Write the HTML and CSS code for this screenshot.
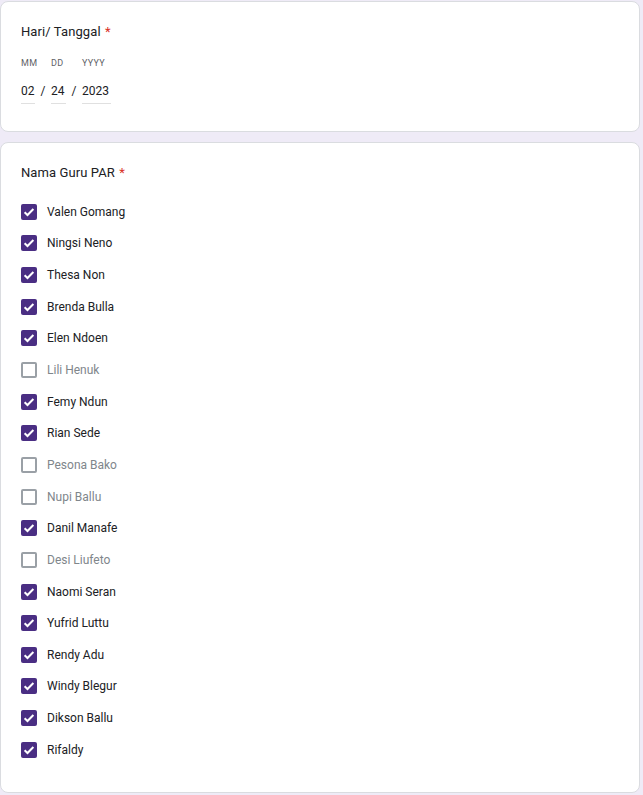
FILE: index.html
```html
<!DOCTYPE html>
<html lang="id">
<head>
<meta charset="utf-8">
<title>Form</title>
<link rel="stylesheet" href="styles.css">
</head>
<body>
<main class="page">
  <section class="card card-date">
    <div class="q-title">Hari/ Tanggal <span class="req">*</span></div>
    <div class="date">
      <div class="date-part w-mm">
        <div class="date-label">MM</div>
        <div class="date-value">02</div>
      </div>
      <div class="date-sep">/</div>
      <div class="date-part w-dd">
        <div class="date-label">DD</div>
        <div class="date-value">24</div>
      </div>
      <div class="date-sep">/</div>
      <div class="date-part w-yy">
        <div class="date-label">YYYY</div>
        <div class="date-value">2023</div>
      </div>
    </div>
  </section>

  <section class="card card-list">
    <div class="q-title">Nama Guru PAR <span class="req">*</span></div>
    <ul class="opts">
      <li class="opt on"><span class="box"><svg viewBox="0 0 16 16"><path d="M3.6 8.2l2.9 2.8 5.9-6"/></svg></span><span class="lbl">Valen Gomang</span></li>
      <li class="opt on"><span class="box"><svg viewBox="0 0 16 16"><path d="M3.6 8.2l2.9 2.8 5.9-6"/></svg></span><span class="lbl">Ningsi Neno</span></li>
      <li class="opt on"><span class="box"><svg viewBox="0 0 16 16"><path d="M3.6 8.2l2.9 2.8 5.9-6"/></svg></span><span class="lbl">Thesa Non</span></li>
      <li class="opt on"><span class="box"><svg viewBox="0 0 16 16"><path d="M3.6 8.2l2.9 2.8 5.9-6"/></svg></span><span class="lbl">Brenda Bulla</span></li>
      <li class="opt on"><span class="box"><svg viewBox="0 0 16 16"><path d="M3.6 8.2l2.9 2.8 5.9-6"/></svg></span><span class="lbl">Elen Ndoen</span></li>
      <li class="opt off"><span class="box"></span><span class="lbl">Lili Henuk</span></li>
      <li class="opt on"><span class="box"><svg viewBox="0 0 16 16"><path d="M3.6 8.2l2.9 2.8 5.9-6"/></svg></span><span class="lbl">Femy Ndun</span></li>
      <li class="opt on"><span class="box"><svg viewBox="0 0 16 16"><path d="M3.6 8.2l2.9 2.8 5.9-6"/></svg></span><span class="lbl">Rian Sede</span></li>
      <li class="opt off"><span class="box"></span><span class="lbl">Pesona Bako</span></li>
      <li class="opt off"><span class="box"></span><span class="lbl">Nupi Ballu</span></li>
      <li class="opt on"><span class="box"><svg viewBox="0 0 16 16"><path d="M3.6 8.2l2.9 2.8 5.9-6"/></svg></span><span class="lbl">Danil Manafe</span></li>
      <li class="opt off"><span class="box"></span><span class="lbl">Desi Liufeto</span></li>
      <li class="opt on"><span class="box"><svg viewBox="0 0 16 16"><path d="M3.6 8.2l2.9 2.8 5.9-6"/></svg></span><span class="lbl">Naomi Seran</span></li>
      <li class="opt on"><span class="box"><svg viewBox="0 0 16 16"><path d="M3.6 8.2l2.9 2.8 5.9-6"/></svg></span><span class="lbl">Yufrid Luttu</span></li>
      <li class="opt on"><span class="box"><svg viewBox="0 0 16 16"><path d="M3.6 8.2l2.9 2.8 5.9-6"/></svg></span><span class="lbl">Rendy Adu</span></li>
      <li class="opt on"><span class="box"><svg viewBox="0 0 16 16"><path d="M3.6 8.2l2.9 2.8 5.9-6"/></svg></span><span class="lbl">Windy Blegur</span></li>
      <li class="opt on"><span class="box"><svg viewBox="0 0 16 16"><path d="M3.6 8.2l2.9 2.8 5.9-6"/></svg></span><span class="lbl">Dikson Ballu</span></li>
      <li class="opt on"><span class="box"><svg viewBox="0 0 16 16"><path d="M3.6 8.2l2.9 2.8 5.9-6"/></svg></span><span class="lbl">Rifaldy</span></li>
    </ul>
  </section>
</main>
</body>
</html>
```

FILE: styles.css
```css
html, body {
  margin: 0;
  padding: 0;
}
body {
  background: #efebf7;
  font-family: Roboto, "Noto Sans", Arial, sans-serif;
  color: #202124;
}
.page {
  display: flex;
  flex-direction: column;
  gap: 10px;
  width: 640px;
  padding-top: 1px;
}
.card {
  background: #fff;
  border: 1px solid #dadce0;
  border-radius: 8px;
  box-sizing: border-box;
  padding: 0 20px;
}
.card-date {
  height: 131px;
  padding-top: 21px;
}
.card-list {
  height: 651px;
  padding-top: 21px;
}
.q-title {
  font-size: 13px;
  line-height: 18px;
  color: #202124;
  letter-spacing: 0.1px;
}
.req {
  color: #d93025;
  margin-left: 1px;
}
.date {
  display: flex;
  align-items: flex-end;
  margin-top: 16px;
}
.date-part {
  display: flex;
  flex-direction: column;
  flex: none;
}
.w-mm { width: 14px; }
.w-dd { width: 15px; }
.w-yy { width: 29px; }
.date-label {
  font-size: 9px;
  line-height: 12px;
  color: #5f6368;
  letter-spacing: 0.3px;
  white-space: nowrap;
}
.date-value {
  margin-top: 14px;
  font-size: 12px;
  line-height: 16px;
  padding-bottom: 4px;
  border-bottom: 1px solid #e0e0e0;
  color: #202124;
  white-space: nowrap;
}
.date-sep {
  font-size: 12px;
  line-height: 16px;
  padding-bottom: 5px;
  width: 16px;
  flex: none;
  text-align: center;
  color: #202124;
}
.opts {
  list-style: none;
  margin: 14px 0 0;
  padding: 0;
}
.opt {
  display: flex;
  align-items: center;
  height: 31.65px;
  gap: 10px;
}
.box {
  width: 16px;
  height: 16px;
  box-sizing: border-box;
  border-radius: 2px;
  flex: none;
  display: flex;
}
.on .box {
  background: #4a2e83;
}
.off .box {
  border: 2px solid #9aa0a6;
}
.box svg {
  width: 16px;
  height: 16px;
  fill: none;
  stroke: #fff;
  stroke-width: 2;
}
.lbl {
  font-size: 12px;
  line-height: 16px;
}
.on .lbl {
  color: #202124;
}
.off .lbl {
  color: #80868b;
}
```
